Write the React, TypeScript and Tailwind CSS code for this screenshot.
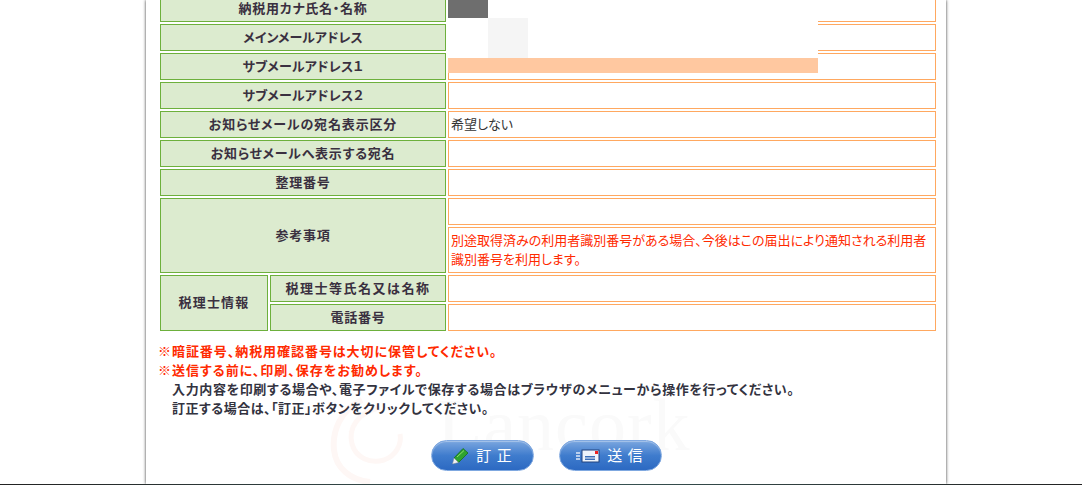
const font = { fontFamily: '"Noto Sans CJK JP", sans-serif', fontFeatureSettings: '"palt"' }

function Label({ children, track = 'tracking-[0.75px]', ...rest }: any) {
  return (
    <td
      {...rest}
      className={`border border-[#6db03c] bg-[#dcebcf] p-0 pb-[2px] text-center align-middle text-[13px] font-bold text-[#3a3040] ${track}`}
    >
      {children}
    </td>
  )
}

function Value({ children }: { children?: any }) {
  return (
    <td className="h-[27px] border border-[#ffa860] bg-white px-[2px] py-0 pb-[2px] align-middle text-[13px] text-[#333]">
      {children}
    </td>
  )
}

function BlueButton({ children }: { children: any }) {
  return (
    <button className="flex h-[31px] w-[103px] items-center justify-center gap-[7px] rounded-full border border-[#7fa8e0] bg-gradient-to-b from-[#7aa6df] via-[#3f7ccd] to-[#2c69c2] text-[15px] tracking-[1px] text-white shadow-[inset_0_1px_1px_rgba(255,255,255,0.35)]">
      {children}
    </button>
  )
}

export default function App() {
  return (
    <div className="h-[485px] w-[1082px] overflow-hidden bg-white" style={font}>
      <div className="relative ml-[146px] h-[484px] w-[800px] overflow-hidden bg-white">
        {/* watermark */}
        <svg className="absolute left-[184px] top-[392px]" width="100" height="92" viewBox="0 0 100 92" fill="none">
          <path d="M32 8 C10 18 2 40 4 58 C6 76 20 88 40 90" stroke="#fef7f5" strokeWidth="6" />
          <path d="M50 16 C28 20 18 36 22 52 C26 66 40 72 54 68 C66 64 72 52 70 42" stroke="#fef7f5" strokeWidth="5" />
        </svg>
        <div className="absolute left-[291px] top-[388px] font-['Liberation_Serif',serif] text-[74px] leading-none tracking-[1px] text-[#fafafa]">
          Lancork
        </div>

        <div className="relative -mt-[7px] pl-[12px]">
          <table className="w-[780px] table-fixed border-separate border-spacing-[2px]">
            <colgroup>
              <col className="w-[108px]" />
              <col className="w-[176px]" />
              <col className="w-[488px]" />
            </colgroup>
            <tbody>
              <tr><Label colSpan={2}>納税用カナ氏名・名称</Label><Value /></tr>
              <tr><Label colSpan={2} track="tracking-normal">メインメールアドレス</Label><Value /></tr>
              <tr><Label colSpan={2} track="tracking-[0.2px]">サブメールアドレス１</Label><Value /></tr>
              <tr><Label colSpan={2} track="tracking-[0.2px]">サブメールアドレス２</Label><Value /></tr>
              <tr><Label colSpan={2} track="tracking-[0.85px]">お知らせメールの宛名表示区分</Label><Value>希望しない</Value></tr>
              <tr><Label colSpan={2}>お知らせメールへ表示する宛名</Label><Value /></tr>
              <tr><Label colSpan={2}>整理番号</Label><Value /></tr>
              <tr><Label colSpan={2} rowSpan={2}>参考事項</Label><Value /></tr>
              <tr>
                <td className="h-[46px] border border-[#ffa860] bg-white px-[2px] py-0 pb-[2px] align-middle text-[13px] leading-[19px] text-[#ff2a00]">
                  別途取得済みの利用者識別番号がある場合、今後はこの届出により通知される利用者識別番号を利用します。
                </td>
              </tr>
              <tr><Label rowSpan={2} track="tracking-[1.2px]">税理士情報</Label><Label track="tracking-[1.5px]">税理士等氏名又は名称</Label><Value /></tr>
              <tr><Label>電話番号</Label><Value /></tr>
            </tbody>
          </table>

          {/* redacted values */}
          <div className="absolute left-[302px] top-0 h-[25px] w-[40px] bg-[#6e6e6e]" />
          <div className="absolute left-[302px] top-[25px] flex h-[40px] w-[370px] bg-white">
            <div className="ml-[40px] h-full w-[40px] bg-[#f5f5f5]" />
          </div>
          <div className="absolute left-[302px] top-[65px] h-[15px] w-[370px] bg-[#ffc8a0]" />
        </div>

        <div className="relative mt-[8px] pl-[12px] text-[13px] font-bold leading-[19px] text-[#33333f]">
          <p className="tracking-[0.95px] text-[#ff2a00]">※暗証番号、納税用確認番号は大切に保管してください。</p>
          <p className="tracking-[1px] text-[#ff2a00]">※送信する前に、印刷、保存をお勧めします。</p>
          <p className="pl-[14px] tracking-[0.65px]">入力内容を印刷する場合や、電子ファイルで保存する場合はブラウザのメニューから操作を行ってください。</p>
          <p className="pl-[14px] tracking-[0.5px]">訂正する場合は、「訂正」ボタンをクリックしてください。</p>
        </div>

        <div className="relative mt-[23px] flex justify-center gap-[25px]">
          <BlueButton>
            <svg width="18" height="18" viewBox="0 0 18 18">
              <path d="M3 11 L12 1.5 L17 6 L7.5 15.5 Z" fill="#2fa32f" stroke="#17701c" strokeWidth="0.8" />
              <path d="M6 10 L13 3.5" stroke="#8fdc6a" strokeWidth="1" />
              <path d="M3 11 L7.5 15.5 L1.5 17 Z" fill="#f2f2f2" stroke="#7d8a99" strokeWidth="0.5" />
            </svg>
            訂 正
          </BlueButton>
          <BlueButton>
            <svg width="24" height="14" viewBox="0 0 24 14">
              <path d="M0 4 H4 M0 7 H4 M0 10 H4" stroke="#dfe9f7" strokeWidth="1.5" />
              <rect x="6" y="1" width="17" height="12" fill="#eef4fb" stroke="#20437f" />
              <rect x="9" y="7" width="10" height="1.5" fill="#3b6fb8" />
              <rect x="9" y="9.5" width="10" height="1.5" fill="#3b6fb8" />
              <rect x="19" y="2" width="3" height="3" fill="#e22" />
            </svg>
            送 信
          </BlueButton>
        </div>
      </div>
      {/* edges of the page column */}
      <div className="pointer-events-none absolute left-[146px] top-0 h-[484px] w-[800px] shadow-[0_0_3px_rgba(0,0,0,0.8)]" />
      <div className="absolute left-0 top-[484px] h-[1px] w-[1082px] bg-gradient-to-r from-[#222] via-[#3a5a5a] to-[#222]" />
    </div>
  )
}
